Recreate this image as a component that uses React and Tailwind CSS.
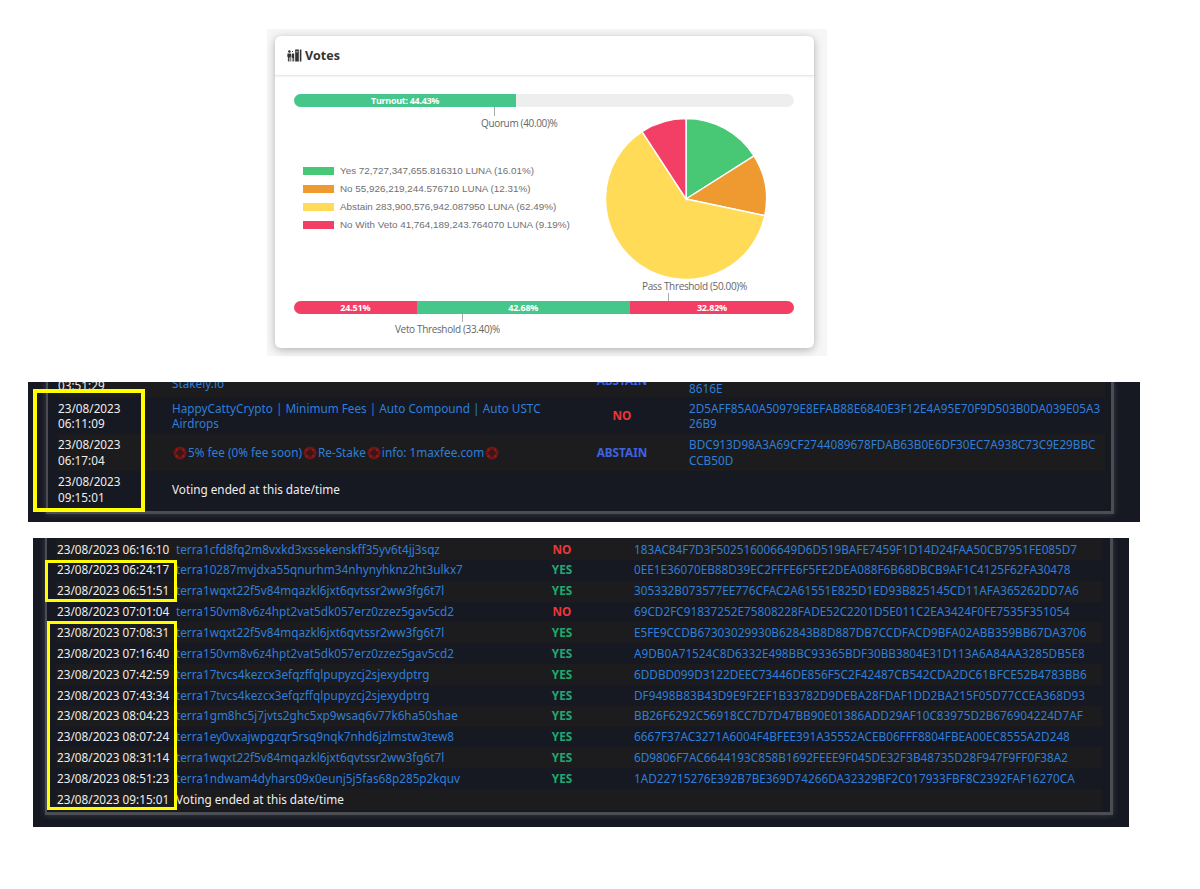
import React from "react";

const pieData = [
  { pct: 16.01, color: "#48c774" },
  { pct: 12.31, color: "#ee9a30" },
  { pct: 62.49, color: "#ffdb58" },
  { pct: 9.19, color: "#f33f66" },
];

const legend = [
  { color: "bg-[#48c774]", text: "Yes 72,727,347,655.816310 LUNA (16.01%)" },
  { color: "bg-[#ee9a30]", text: "No 55,926,219,244.576710 LUNA (12.31%)" },
  { color: "bg-[#ffdb58]", text: "Abstain 283,900,576,942.087950 LUNA (62.49%)" },
  { color: "bg-[#f33f66]", text: "No With Veto 41,764,189,243.764070 LUNA (9.19%)" },
];

const validatorRows = [
  {
    date: "23/08/2023",
    time: "06:11:09",
    name: "HappyCattyCrypto | Minimum Fees | Auto Compound | Auto USTC Airdrops",
    vote: "NO",
    hash: ["2D5AFF85A0A50979E8EFAB88E6840E3F12E4A95E70F9D503B0DA039E05A3", "26B9"],
  },
  {
    date: "23/08/2023",
    time: "06:17:04",
    buoy: true,
    vote: "ABSTAIN",
    hash: ["BDC913D98A3A69CF2744089678FDAB63B0E6DF30EC7A938C73C9E29BBC", "CCB50D"],
  },
];

const voteRows = [
  ["23/08/2023 06:16:10", "terra1cfd8fq2m8vxkd3xssekenskff35yv6t4jj3sqz", "NO", "183AC84F7D3F502516006649D6D519BAFE7459F1D14D24FAA50CB7951FE085D7"],
  ["23/08/2023 06:24:17", "terra10287mvjdxa55qnurhm34nhynyhknz2ht3ulkx7", "YES", "0EE1E36070EB88D39EC2FFFE6F5FE2DEA088F6B68DBCB9AF1C4125F62FA30478"],
  ["23/08/2023 06:51:51", "terra1wqxt22f5v84mqazkl6jxt6qvtssr2ww3fg6t7l", "YES", "305332B073577EE776CFAC2A61551E825D1ED93B825145CD11AFA365262DD7A6"],
  ["23/08/2023 07:01:04", "terra150vm8v6z4hpt2vat5dk057erz0zzez5gav5cd2", "NO", "69CD2FC91837252E75808228FADE52C2201D5E011C2EA3424F0FE7535F351054"],
  ["23/08/2023 07:08:31", "terra1wqxt22f5v84mqazkl6jxt6qvtssr2ww3fg6t7l", "YES", "E5FE9CCDB67303029930B62843B8D887DB7CCDFACD9BFA02ABB359BB67DA3706"],
  ["23/08/2023 07:16:40", "terra150vm8v6z4hpt2vat5dk057erz0zzez5gav5cd2", "YES", "A9DB0A71524C8D6332E498BBC93365BDF30BB3804E31D113A6A84AA3285DB5E8"],
  ["23/08/2023 07:42:59", "terra17tvcs4kezcx3efqzffqlpupyzcj2sjexydptrg", "YES", "6DDBD099D3122DEEC73446DE856F5C2F42487CB542CDA2DC61BFCE52B4783BB6"],
  ["23/08/2023 07:43:34", "terra17tvcs4kezcx3efqzffqlpupyzcj2sjexydptrg", "YES", "DF9498B83B43D9E9F2EF1B33782D9DEBA28FDAF1DD2BA215F05D77CCEA368D93"],
  ["23/08/2023 08:04:23", "terra1gm8hc5j7jvts2ghc5xp9wsaq6v77k6ha50shae", "YES", "BB26F6292C56918CC7D7D47BB90E01386ADD29AF10C83975D2B676904224D7AF"],
  ["23/08/2023 08:07:24", "terra1ey0vxajwpgzqr5rsq9nqk7nhd6jzlmstw3tew8", "YES", "6667F37AC3271A6004F4BFEE391A35552ACEB06FFF8804FBEA00EC8555A2D248"],
  ["23/08/2023 08:31:14", "terra1wqxt22f5v84mqazkl6jxt6qvtssr2ww3fg6t7l", "YES", "6D9806F7AC6644193C858B1692FEEE9F045DE32F3B48735D28F947F9FF0F38A2"],
  ["23/08/2023 08:51:23", "terra1ndwam4dyhars09x0eunj5j5fas68p285p2kquv", "YES", "1AD22715276E392B7BE369D74266DA32329BF2C017933FBF8C2392FAF16270CA"],
];

const voteColor = {
  YES: "text-[#1fa971]",
  NO: "text-[#e8383d]",
  ABSTAIN: "text-[#3f62e0]",
};

// slice path, angles start at 12 o'clock and run clockwise
const slicePath = (from, to, r) => {
  const point = (a) => {
    const rad = ((a - 90) * Math.PI) / 180;
    return `${(81 + r * Math.cos(rad)).toFixed(2)} ${(81 + r * Math.sin(rad)).toFixed(2)}`;
  };
  return `M81 81 L${point(from)} A${r} ${r} 0 ${to - from > 180 ? 1 : 0} 1 ${point(to)} Z`;
};

const PieChart = () => {
  let angle = 0;
  return (
    <svg width="162" height="162" viewBox="0 0 162 162" className="shrink-0">
      {pieData.map((s) => {
        const from = angle;
        angle += (s.pct / 100) * 360;
        return <path key={s.color} d={slicePath(from, angle, 80.5)} fill={s.color} stroke="#fff" strokeWidth="1.4" />;
      })}
    </svg>
  );
};

const VotesIcon = () => (
  <svg width="15" height="15" viewBox="0 0 15 14" fill="#333">
    <circle cx="2.4" cy="3" r="1.3" />
    <path d="M0.5 5h3.6l.4 3.2h-.9V13h-1v-4h-.7v4h-1V8.2H.2z" />
    <path d="M5 2.5h1v1H5zM5 5h2.2v8H6.2V9.5h-.7V13H4.8V8.5L5 6z" />
    <rect x="8.2" y="1" width="3.6" height="12" />
    <rect x="12.8" y="1" width="1.6" height="12" />
    <rect x="8.9" y="3" width="2.2" height="0.7" fill="#fff" />
  </svg>
);

const Buoy = () => (
  <svg width="14" height="14" viewBox="0 0 14 14" className="inline-block align-[-3px] mx-px">
    <circle cx="7" cy="7" r="5" fill="#3a1518" stroke="#6e1616" strokeWidth="3" />
    <path d="M2.8 2.8l2 2M11.2 2.8l-2 2M2.8 11.2l2-2M11.2 11.2l-2-2" stroke="#8f1c1c" strokeWidth="1.8" />
  </svg>
);

const Tick = ({ left, height }) => <div className={`w-px bg-[#aaaaaa] ${left} ${height}`} />;

const VotesCard = () => (
  <div className="ml-[267px] mt-[29px] w-[560px] h-[327px] shrink-0 bg-[#f6f6f6] pl-2 pr-[13px] pt-[7px] font-['Open_Sans',sans-serif]">
    <div className="h-[312px] bg-white rounded-md shadow-[0_2px_8px_rgba(0,0,0,0.28)]">
      <div className="h-10 flex items-center gap-[3px] pl-[12px] border-b border-[#e8e8e8] shadow-[0_1px_2px_rgba(0,0,0,0.06)]">
        <VotesIcon />
        <span className="mt-px text-[12.5px] font-bold text-[#333333]">Votes</span>
      </div>
      <div className="pl-[19px] pr-[20px] pt-[18px]">
        <div className="h-[13px] rounded-full bg-[#eeeeee] overflow-hidden">
          <div className="h-full w-[44.43%] bg-[#45c68a] text-white text-[9px] tracking-[-0.3px] font-bold leading-[13px] text-center">
            Turnout: 44.43%
          </div>
        </div>
        <Tick left="ml-[200px]" height="h-[9px]" />
        <div className="ml-[187px] text-[10px] tracking-[-0.35px] leading-[15px] text-[#666666]">Quorum (40.00)%</div>
        <div className="flex -mt-[13px] h-[162px]">
          <div className="ml-[9px] w-[302px] shrink-0 pt-[44px] flex flex-col font-['Liberation_Sans',sans-serif]">
            {legend.map((l) => (
              <div key={l.text} className="h-[18px] flex items-center gap-[6px]">
                <div className={`w-[31px] h-2 ${l.color}`} />
                <span className="text-[9.85px] text-[#707070] whitespace-nowrap">{l.text}</span>
              </div>
            ))}
          </div>
          <PieChart />
        </div>
        <div className="ml-[348px] -mt-px text-[10px] tracking-[-0.35px] leading-[14px] text-[#666666] whitespace-nowrap">Pass Threshold (50.00)%</div>
        <Tick left="ml-[374px]" height="h-2" />
        <div className="h-[13px] rounded-full overflow-hidden flex text-white text-[9px] tracking-[-0.2px] font-bold leading-[13px] text-center">
          <div className="w-[24.51%] bg-[#f33f66]">24.51%</div>
          <div className="w-[42.68%] bg-[#45c68a]">42.68%</div>
          <div className="w-[32.82%] bg-[#f33f66]">32.82%</div>
        </div>
        <Tick left="ml-[168px]" height="h-2" />
        <div className="ml-[101px] text-[10px] tracking-[-0.35px] leading-[15px] text-[#666666] whitespace-nowrap">Veto Threshold (33.40)%</div>
      </div>
    </div>
  </div>
);

const ValidatorsPanel = () => (
  <div className="relative ml-[28px] mt-[26px] w-[1112px] h-[140px] shrink-0 bg-[#161822] overflow-hidden font-['Noto_Sans',sans-serif] text-[11.75px] leading-[15.5px]">
    <div className="ml-[18px] mr-[26px] h-[132px] border-l-2 border-r-[3px] border-b-[3px] border-[#4c4d52] shadow-[0_0_6px_rgba(120,120,130,0.4)]">
      <div className="ml-[10px] mr-[6px]">
        <div className="flex h-[15px] bg-[#1c1c1e] overflow-hidden">
          <div className="w-[114px] shrink-0 -mt-[4px] text-[#eeeeee]">03:51:29</div>
          <div className="w-[400px] shrink-0 -mt-[6px] text-[#2f7fd8]">Stakely.io</div>
          <div className="w-[100px] shrink-0 -mt-[9px] text-center font-bold text-[#3f62e0]">ABSTAIN</div>
          <div className="ml-[17px] -mt-[1px] text-[#2f7fd8]">8616E</div>
        </div>
        {validatorRows.map((row, i) => (
          <div key={row.time} className={`flex items-center h-[37px] ${i % 2 === 0 ? "bg-[#161822] pt-px" : "bg-[#1c1c1e]"}`}>
            <div className="w-[114px] shrink-0 text-[#eeeeee]">
              {row.date}
              <br />
              {row.time}
            </div>
            <div className="w-[400px] shrink-0 pr-[28px] text-[#2f7fd8]">
              {row.buoy ? (
                <>
                  <Buoy />5% fee (0% fee soon)<Buoy />Re-Stake<Buoy />info: 1maxfee.com<Buoy />
                </>
              ) : (
                row.name
              )}
            </div>
            <div className={`w-[100px] shrink-0 text-center font-bold ${voteColor[row.vote]}`}>{row.vote}</div>
            <div className="ml-[17px] shrink-0 whitespace-nowrap text-[#2f7fd8]">
              {row.hash[0]}
              <br />
              {row.hash[1]}
            </div>
          </div>
        ))}
        <div className="flex items-center h-[37px]">
          <div className="w-[114px] shrink-0 text-[#eeeeee]">
            23/08/2023
            <br />
            09:15:01
          </div>
          <div className="text-[#eeeeee]">Voting ended at this date/time</div>
        </div>
      </div>
    </div>
    <div className="absolute left-[5px] top-[7px] w-[112px] h-[123px] border-[4px] border-[#ffff00]" />
  </div>
);

const VotesPanel = () => (
  <div className="relative ml-[33px] mt-[16px] w-[1096px] h-[289px] shrink-0 bg-[#161822] overflow-hidden font-['Noto_Sans',sans-serif] text-[11.75px]">
    <div className="ml-[12px] mr-[16px] h-[277px] pt-px border-l-2 border-r-[3px] border-b-[3px] border-[#4c4d52] shadow-[0_0_6px_rgba(120,120,130,0.4)]">
      <div className="ml-[9px] mr-[8px]">
        {voteRows.map((r, i) => (
          <div key={r[0]} className={`flex items-center h-[20.85px] whitespace-nowrap ${i % 2 === 0 ? "bg-[#1c1c1e]" : "bg-[#161822]"}`}>
            <div className="w-[120px] shrink-0 pl-px text-[#eeeeee]">{r[0]}</div>
            <div className="w-[362px] shrink-0 text-[#2f7fd8]">{r[1]}</div>
            <div className={`w-[48px] shrink-0 text-center font-bold ${voteColor[r[2]]}`}>{r[2]}</div>
            <div className="ml-[48px] text-[#2f7fd8]">{r[3]}</div>
          </div>
        ))}
        <div className="flex items-center h-[20.85px] bg-[#1c1c1e]">
          <div className="w-[120px] shrink-0 pl-px text-[#eeeeee]">23/08/2023 09:15:01</div>
          <div className="text-[#eeeeee]">Voting ended at this date/time</div>
        </div>
      </div>
    </div>
    <div className="absolute left-[12px] top-[22px] w-[132px] h-[42px] border-[3px] border-[#ffff00]" />
    <div className="absolute left-[14px] top-[83px] w-[130px] h-[189px] border-[3px] border-[#ffff00]" />
  </div>
);

const App = () => (
  <div className="w-[1200px] h-[889px] bg-white flex flex-col overflow-hidden">
    <VotesCard />
    <ValidatorsPanel />
    <VotesPanel />
  </div>
);

export default App;
